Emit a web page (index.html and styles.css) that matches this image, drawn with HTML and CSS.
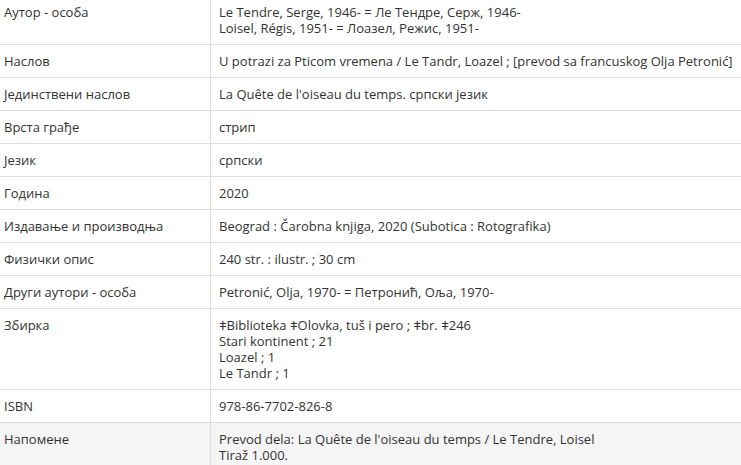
FILE: index.html
```html
<!DOCTYPE html>
<html lang="sr">
<head>
<meta charset="utf-8">
<title>Запис</title>
<link rel="stylesheet" href="styles.css">
</head>
<body>
<table class="record">
  <tbody>
    <tr><td class="label">Аутор - особа</td><td class="value">Le Tendre, Serge, 1946- = Ле Тендре, Серж, 1946-<br>Loisel, Régis, 1951- = Лоазел, Режис, 1951-</td></tr>
    <tr><td class="label">Наслов</td><td class="value">U potrazi za Pticom vremena / Le Tandr, Loazel ; [prevod sa francuskog Olja Petronić]</td></tr>
    <tr><td class="label">Јединствени наслов</td><td class="value">La Quête de l'oiseau du temps. српски језик</td></tr>
    <tr><td class="label">Врста грађе</td><td class="value">стрип</td></tr>
    <tr><td class="label">Језик</td><td class="value">српски</td></tr>
    <tr><td class="label">Година</td><td class="value">2020</td></tr>
    <tr><td class="label">Издавање и производња</td><td class="value">Beograd : Čarobna knjiga, 2020 (Subotica : Rotografika)</td></tr>
    <tr><td class="label">Физички опис</td><td class="value">240 str. : ilustr. ; 30 cm</td></tr>
    <tr><td class="label">Други аутори - особа</td><td class="value">Petronić, Olja, 1970- = Петронић, Оља, 1970-</td></tr>
    <tr><td class="label">Збирка</td><td class="value"><span class="sf">ǂ</span>Biblioteka <span class="sf">ǂ</span>Olovka, tuš i pero ; <span class="sf">ǂ</span>br. <span class="sf">ǂ</span>246<br>Stari kontinent ; 21<br>Loazel ; 1<br>Le Tandr ; 1</td></tr>
    <tr><td class="label">ISBN</td><td class="value">978-86-7702-826-8</td></tr>
    <tr class="hover"><td class="label">Напомене</td><td class="value">Prevod dela: La Quête de l'oiseau du temps / Le Tendre, Loisel<br>Tiraž 1.000.</td></tr>
  </tbody>
</table>
</body>
</html>
```
FILE: styles.css
```css
html, body {
  margin: 0;
  padding: 0;
  background: #ffffff;
}
body {
  font-family: "Open Sans", "Liberation Sans", sans-serif;
  font-size: 13px;
  line-height: 16px;
  color: #333333;
  overflow: hidden;
}
.record {
  border-collapse: collapse;
  width: 100%;
  margin-top: -5px;
}
.record td {
  border-top: 1px solid #dddddd;
  padding: 8px 8px;
  vertical-align: top;
  text-align: left;
}
.record .label {
  width: 198px;
  padding-left: 4px;
}
.record .value {
  border-left: 1px solid #dddddd;
}
.record .hover td {
  background: #f5f5f5;
}
.sf {
  line-height: 0;
}
```
